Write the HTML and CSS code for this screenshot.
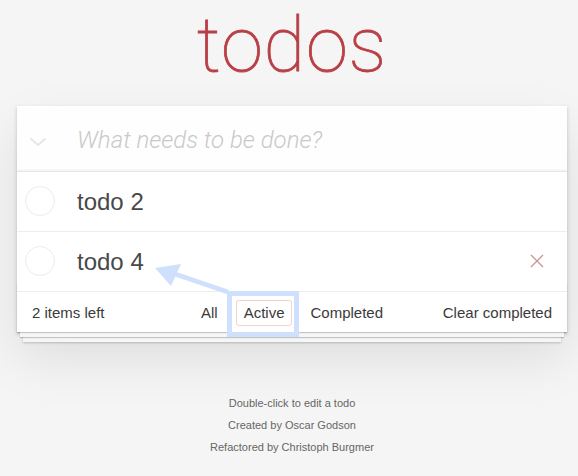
FILE: index.html
```html
<!DOCTYPE html>
<html lang="en">
<head>
<meta charset="utf-8">
<title>todos</title>
<link rel="stylesheet" href="styles.css">
</head>
<body>
<div class="page">
  <h1 class="title">todos</h1>
  <section class="app">
    <header class="new-row">
      <span class="toggle-all">
        <svg width="18" height="10" viewBox="0 0 18 10"><polyline points="1.5,1.5 9,8 16.5,1.5" fill="none" stroke="#e6e6e6" stroke-width="2"/></svg>
      </span>
      <input class="new-todo" placeholder="What needs to be done?">
    </header>
    <ul class="list">
      <li class="item"><span class="check"></span><label class="item-label">todo 2</label></li>
      <li class="item"><span class="check"></span><label class="item-label">todo 4</label>
        <span class="destroy"><svg width="14" height="14" viewBox="0 0 14 14"><path d="M1 1L13 13M13 1L1 13" stroke="#cf9595" stroke-width="1.4" fill="none"/></svg></span>
      </li>
    </ul>
    <footer class="footer">
      <span class="count">2 items left</span>
      <ul class="filters">
        <li><a class="filter">All</a></li>
        <li><a class="filter selected">Active</a></li>
        <li><a class="filter">Completed</a></li>
      </ul>
      <span class="clear">Clear completed</span>
    </footer>
  </section>
  <footer class="info">
    <p>Double-click to edit a todo</p>
    <p>Created by Oscar Godson</p>
    <p>Refactored by Christoph Burgmer</p>
  </footer>
</div>
<svg class="annotation" width="578" height="476" viewBox="0 0 578 476">
  <rect x="229.5" y="293.5" width="67" height="41" fill="none" stroke="#cfe0fc" stroke-width="5"/>
  <line x1="228" y1="292" x2="172" y2="273" stroke="#cfe0fc" stroke-width="4.5"/>
  <polygon points="155,268 181,264 171,286" fill="#cfe0fc"/>
</svg>
</body>
</html>
```
FILE: styles.css
```css
html, body {
  margin: 0;
  padding: 0;
}
body {
  background: #f5f5f5;
  color: #111;
  font-family: "Liberation Sans", Arial, sans-serif;
  font-size: 14px;
  line-height: 1.4em;
}
.page {
  width: 550px;
  margin-left: 17px;
}
.title {
  margin: 0;
  height: 106px;
  font-family: Roboto, sans-serif;
  font-size: 76px;
  letter-spacing: 0.8px;
  line-height: 90px;
  font-weight: 100;
  -webkit-text-stroke: 0.8px #b83f45;
  color: #b83f45;
  text-align: center;
}
.app {
  background: #fff;
  box-shadow: 0 2px 4px 0 rgba(0,0,0,0.2), 0 25px 50px 0 rgba(0,0,0,0.1);
  position: relative;
}
.new-row {
  display: flex;
  align-items: center;
  height: 65px;
  box-shadow: inset 0 -2px 1px rgba(0,0,0,0.03);
  background: rgba(0,0,0,0.003);
}
.toggle-all {
  width: 60px;
  display: flex;
  justify-content: flex-start;
  padding-left: 12px;
  box-sizing: border-box;
  margin-top: 7px;
}
.new-todo {
  flex: 1;
  border: none;
  outline: none;
  background: transparent;
  padding: 3px 16px 0 0;
  height: 65px;
  box-sizing: border-box;
  font-family: Roboto, sans-serif;
  font-size: 24px;
  font-weight: 300;
  color: #4d4d4d;
}
.new-todo::placeholder {
  font-style: italic;
  font-weight: 300;
  color: #c9c9c9;
}
.list {
  list-style: none;
  margin: 0;
  padding: 0;
  border-top: 1px solid #e6e6e6;
}
.item {
  display: flex;
  align-items: center;
  padding-left: 8px;
  border-bottom: 1px solid #ededed;
  font-size: 24px;
}
.check {
  width: 30px;
  height: 30px;
  box-sizing: border-box;
  border: 1px solid #ececec;
  border-radius: 50%;
  flex: none;
}
.item-label {
  flex: 1;
  padding: 16px 15px 14px 22px;
  line-height: 1.2;
  color: #484848;
}
.destroy {
  display: flex;
  margin-right: 23px;
}
.footer {
  position: relative;
  display: grid;
  grid-template-columns: 1fr auto 1fr;
  align-items: center;
  padding: 8px 15px 6px;
  font-size: 15px;
  line-height: 18px;
  color: #3a3a3a;
}
.footer::before {
  content: '';
  position: absolute;
  left: 0;
  right: 0;
  bottom: 0;
  height: 50px;
  overflow: hidden;
  box-shadow: 0 1px 1px rgba(0,0,0,0.2), 0 8px 0 -3px #f6f6f6, 0 9px 1px -3px rgba(0,0,0,0.2), 0 16px 0 -6px #f6f6f6, 0 17px 2px -6px rgba(0,0,0,0.2);
  pointer-events: none;
}
.count {
  position: relative;
  justify-self: start;
}
.filters {
  position: relative;
  list-style: none;
  margin: 0;
  padding: 0;
  display: flex;
  gap: 4px;
}
.filter {
  display: block;
  margin: 0 3px;
  padding: 3px 7px;
  line-height: 18px;
  border: 1px solid transparent;
  border-radius: 3px;
}
.filter.selected {
  border-color: rgba(206,70,70,0.25);
}
.clear {
  position: relative;
  justify-self: end;
}
.info {
  margin-top: 66px;
  text-align: center;
  font-size: 11px;
  color: #666;
}
.info p {
  line-height: 1;
  margin: 11px 0;
}
.annotation {
  position: absolute;
  top: 0;
  left: 0;
  pointer-events: none;
}
```
